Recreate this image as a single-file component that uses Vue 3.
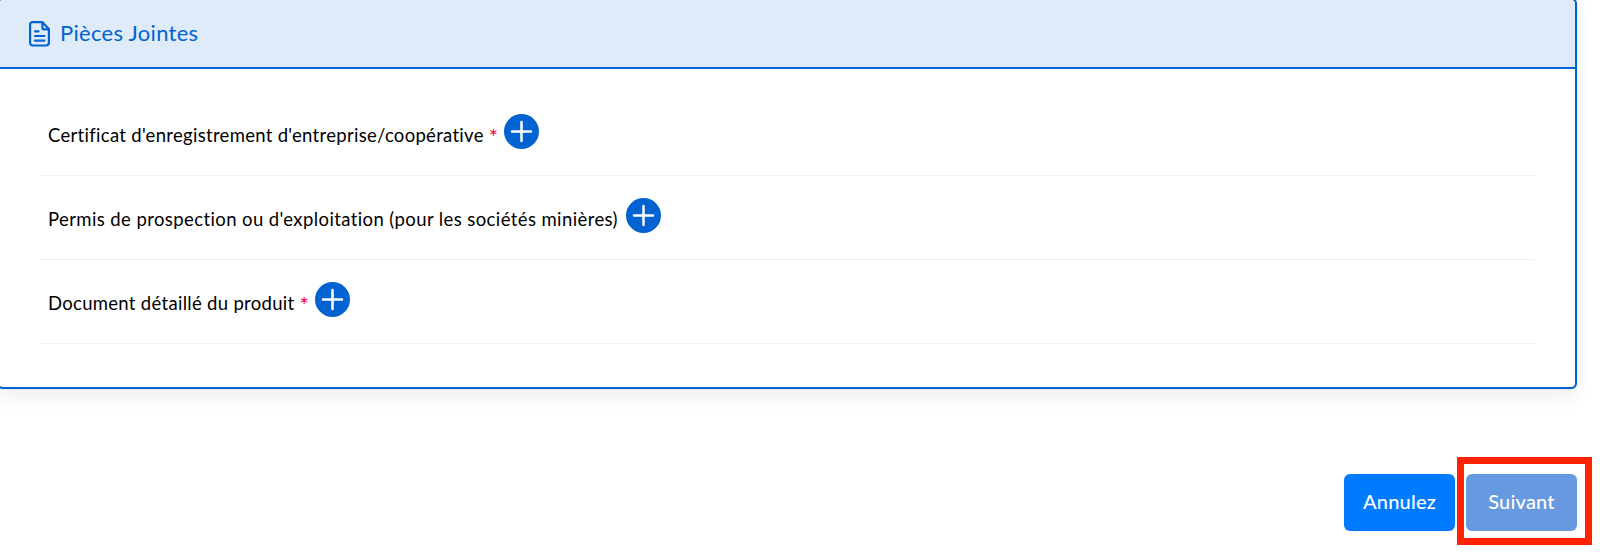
<script setup>
const rows = [
  { label: "Certificat d'enregistrement d'entreprise/coopérative", required: true },
  { label: "Permis de prospection ou d'exploitation (pour les sociétés minières)", required: false },
  { label: 'Document détaillé du produit', required: true },
]
</script>

<template>
  <div class="page">
    <section class="card">
      <header class="card-head">
        <svg class="doc" viewBox="0 0 21 26" width="21" height="26" fill="none" stroke="#0063d1" stroke-width="2.2" stroke-linecap="round" stroke-linejoin="round">
          <path d="M3.5 1.1h9.7l6.7 7v13.4a3 3 0 0 1-3 3H3.5a2.4 2.4 0 0 1-2.4-2.4V3.5a2.4 2.4 0 0 1 2.4-2.4z" />
          <path d="M13.4 1.5v5.2a1.6 1.6 0 0 0 1.6 1.6h4.6" />
          <path d="M6 10.3h3.6M6 15h9.4M6 19.7h9.4" />
        </svg>
        <span class="title">Pièces Jointes</span>
      </header>
      <div class="card-body">
        <div v-for="row in rows" :key="row.label" class="row" :class="{ optional: !row.required }">
          <span class="label">{{ row.label }}</span>
          <span v-if="row.required" class="req">*</span>
          <button class="add" type="button" aria-label="Ajouter">
            <svg viewBox="0 0 35 35" width="35" height="35"><path d="M8 17.5h19M17.5 8v19" stroke="#fff" stroke-width="2.5" stroke-linecap="round" /></svg>
          </button>
        </div>
      </div>
    </section>
    <footer class="actions">
      <button class="btn cancel" type="button">Annulez</button>
      <div class="next-wrap">
        <button class="btn next" type="button">Suivant</button>
        <div class="highlight"></div>
      </div>
    </footer>
  </div>
</template>

<style>
html, body { margin: 0; background: #fff; overflow: hidden; }
</style>

<style scoped>
.page {
  width: 1600px;
  height: 559px;
  overflow: hidden;
  font-family: "Lato", "Open Sans", sans-serif;
  color: #000;
}
.card {
  box-sizing: border-box;
  width: 1580px;
  height: 391px;
  margin: -2px 0 0 -3px;
  border: 2px solid #0063d1;
  border-radius: 6px;
  background: #fff;
  box-shadow: 0 0 1px rgba(0, 99, 209, 0.7), 0 8px 20px rgba(0, 0, 0, 0.07);
  overflow: hidden;
}
.card-head {
  display: flex;
  align-items: center;
  gap: 10px;
  box-sizing: border-box;
  height: 69px;
  padding: 0 0 0 30px;
  background: #dfebf8;
  border-bottom: 2px solid #0063d1;
  color: #0063d1;
  font-size: 22px;
  letter-spacing: 0.3px;
}
.title {
  margin-bottom: 2px;
}
.card-body {
  padding: 23px 40px 0 41px;
}
.row {
  display: flex;
  align-items: center;
  box-sizing: border-box;
  height: 84px;
  padding: 0 0 4px 8px;
  border-bottom: 1px solid #f3f3f3;
  font-size: 18.5px;
  letter-spacing: 0.3px;
}
.row.optional {
  letter-spacing: 0.4px;
}
.label {
  margin-top: 7px;
}
.req {
  margin: 11px 0 0 5px;
  color: #f5003d;
  font-size: 22px;
  line-height: 1;
}
.add {
  display: block;
  width: 35px;
  height: 35px;
  margin-left: 6px;
  padding: 0;
  border: 0;
  border-radius: 50%;
  background: #0063d1;
}
.row.optional .add {
  margin-left: 8px;
}
.add svg { display: block; }
.actions {
  display: flex;
  justify-content: flex-end;
  gap: 11px;
  margin-top: 85px;
  padding-right: 23px;
}
.btn {
  box-sizing: border-box;
  width: 111px;
  height: 57px;
  padding: 0 0 3px;
  border: 0;
  border-radius: 6px;
  color: #fff;
  font: 500 20px "Lato", "Open Sans", sans-serif;
  letter-spacing: 0.2px;
}
.cancel { background: #007bff; }
.next { display: block; background: #6799e0; }
.next-wrap { position: relative; }
.highlight {
  position: absolute;
  left: -9px;
  top: -17px;
  width: 135px;
  height: 88px;
  box-sizing: border-box;
  border: 7px solid #ff2200;
}
</style>
